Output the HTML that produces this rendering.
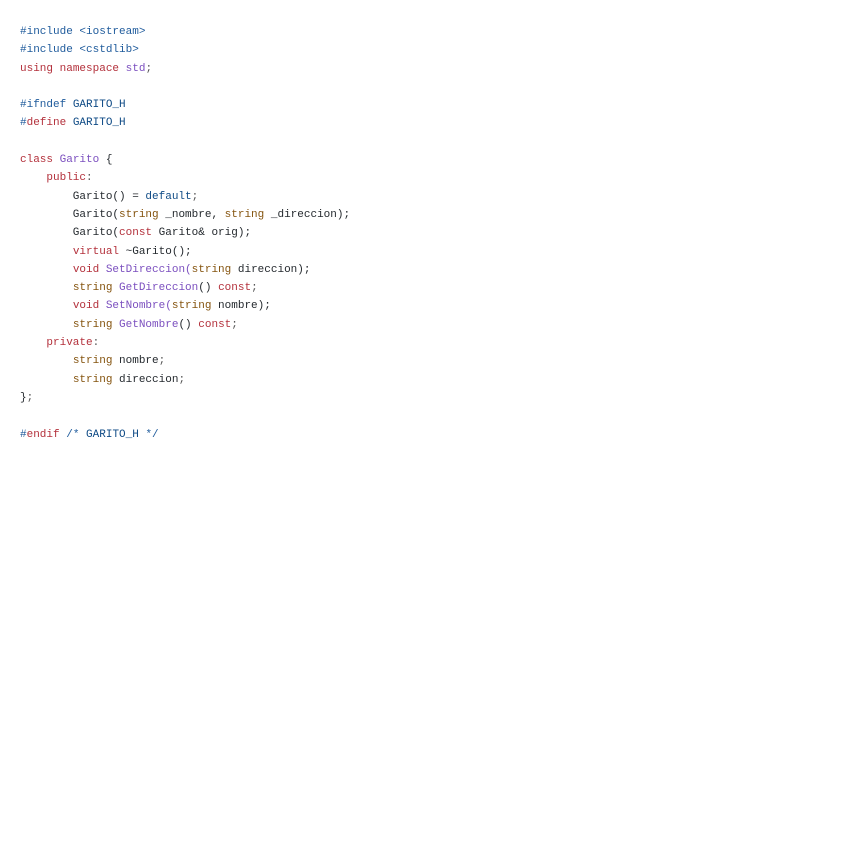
<!DOCTYPE html>
<html><head><meta charset="utf-8"><style>
html,body{margin:0;background:#fff;width:848px;height:848px;overflow:hidden}
pre{margin:0;position:absolute;left:20px;top:23px;font-family:"Liberation Mono",monospace;font-size:11px;line-height:18.3px;color:#24292e}
.k{color:#b3303b}.p{color:#7b4fbf}.b{color:#1f5b9c}.n{color:#0e4a85}.s{color:#85540f}.g{color:#555}
</style></head><body><pre><span class="b">#include &lt;iostream&gt;</span>
<span class="b">#include &lt;cstdlib&gt;</span>
<span class="k">using</span> <span class="k">namespace</span> <span class="p">std</span><span class="g">;</span>

<span class="b">#ifndef</span> <span class="n">GARITO_H</span>
<span class="b">#</span><span class="k">define</span> <span class="n">GARITO_H</span>

<span class="k">class</span> <span class="p">Garito</span> {
    <span class="k">public</span><span class="g">:</span>
        Garito() = <span class="n">default</span><span class="g">;</span>
        Garito(<span class="s">string</span> _nombre, <span class="s">string</span> _direccion);
        Garito(<span class="k">const</span> Garito&amp; orig);
        <span class="k">virtual</span> ~Garito();
        <span class="k">void</span> <span class="p">SetDireccion(</span><span class="s">string</span> direccion);
        <span class="s">string</span> <span class="p">GetDireccion</span>() <span class="k">const</span><span class="g">;</span>
        <span class="k">void</span> <span class="p">SetNombre(</span><span class="s">string</span> nombre);
        <span class="s">string</span> <span class="p">GetNombre</span>() <span class="k">const</span><span class="g">;</span>
    <span class="k">private</span><span class="g">:</span>
        <span class="s">string</span> nombre<span class="g">;</span>
        <span class="s">string</span> direccion<span class="g">;</span>
}<span class="g">;</span>

<span class="b">#</span><span class="k">endif</span> <span class="b">/* </span><span class="n">GARITO_H</span><span class="b"> */</span></pre></body></html>
